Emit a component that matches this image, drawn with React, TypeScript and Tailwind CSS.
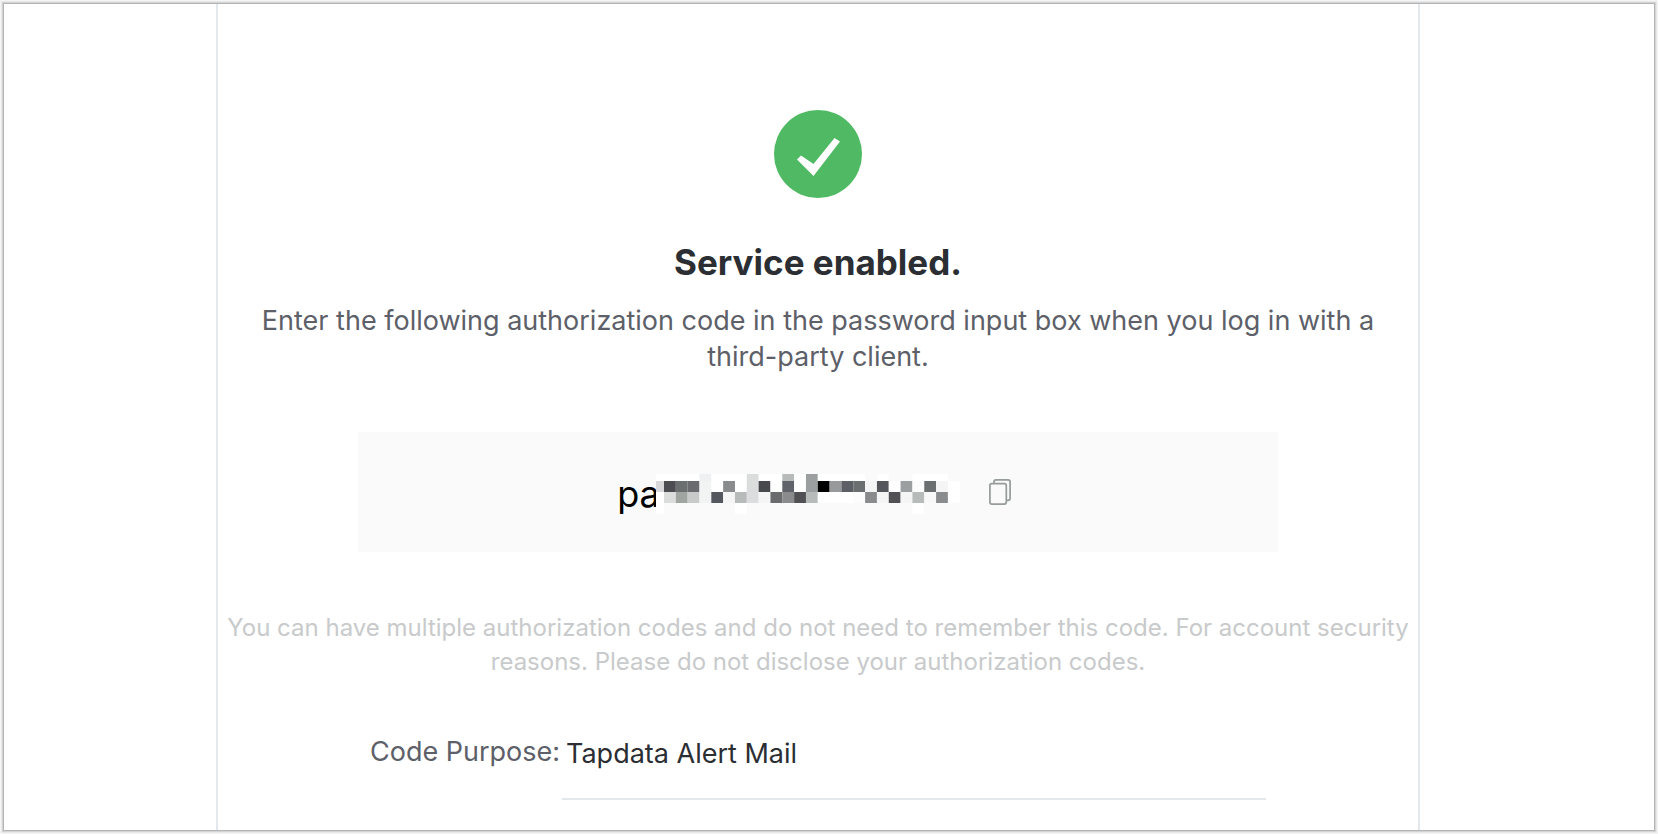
const cell = 11.83;
const rows = [
  { y: 0, h: 7, fills: ['#fff', '#fff', '#fff', '#fff', '#eff0f2', '#fff', '#fff', '#fff', '#dadddc', '#fff', '#fff', '#b7bcba', '#fff', '#9b9fa0', '#fff', '#fff', '#fff', '#fff', '', '#fff', '', '', '#fff', '#fff', '#fff'] },
  { y: 7, h: 11, fills: ['#d8d8da', '#4c4d52', '#6c6f70', '#6a6b6f', '#f2f3f3', '#fff', '#8a8b8d', '#fff', '#dadddc', '#48494d', '#fff', '#606369', '#fff', '#9b9fa0', '#000', '#97999b', '#5d5f67', '#6c6f70', '#f5f5f5', '#54565c', '#fff', '#9b9fa0', '#fcfcfc', '#6c6f70', '#f5f5f5', '#fff'] },
  { y: 18, h: 11, fills: ['#fff', '#dadddc', '#a0a5a2', '#c8cac9', '#f2f3f3', '#55575e', '#f5f5f6', '#b7bcba', '#dcdddf', '#f5f5f5', '#696b6d', '#8a8b8d', '#505055', '#b7bcba', '#fff', '#fff', '#fff', '#fcfcfc', '#8a8b8d', '#f5f5f5', '#505055', '#f5f5f5', '#b7bcba', '#f8f8f8', '#8a8b8d', '#fff'] },
  { y: 29, h: 11, fills: ['#fff', '', '', '', '', '', '', '#fff', '', '', '', '', '', '', '', '', '', '', '', '', '', '', '#fff'] },
];

function MaskedCode() {
  return (
    <svg className="relative -ml-1 h-10 w-[305px] shrink-0" viewBox="0 0 305 40" role="img" aria-label="Hidden part of the authorization code">
      {rows.map((row) =>
        row.fills.map((fill, i) =>
          fill ? (
            <rect key={`${row.y}-${i}`} x={i === 0 ? 0 : 8 + (i - 1) * cell} y={row.y} width={i === 0 ? 8 : cell} height={row.h} fill={fill} />
          ) : null,
        ),
      )}
    </svg>
  );
}

function SuccessIcon() {
  return (
    <svg className="size-[88px]" viewBox="0 0 88 88" aria-hidden="true">
      <circle cx="44" cy="44" r="44" fill="#4fba63" />
      <path d="M23 49.5 L27 45.5 L39.5 54 L60.5 28 L66 31.5 L39.5 66 Z" fill="#fff" />
    </svg>
  );
}

function CopyIcon() {
  return (
    <svg className="h-[26px] w-[22px]" viewBox="0 0 22 26" fill="none" stroke="#959c9a" strokeWidth="1.7" aria-hidden="true">
      <rect x="0.9" y="4.7" width="16.4" height="20.4" rx="2" />
      <path d="M5 4.5V2.9a2 2 0 0 1 2-2h12.1a2 2 0 0 1 2 2v16.4a2 2 0 0 1-2 2h-1.8" />
    </svg>
  );
}

export default function App() {
  return (
    <div className="flex min-h-screen bg-[#f5f5f5] p-1 font-['Inter',sans-serif]">
      <div className="flex flex-1 bg-white pr-[234px] pl-[212px] shadow-[0_0_0_1px_#b4b4b4,0_0_0_2px_#d4d4d4,0_0_0_3px_#e8e8e8]">
        <main className="flex flex-1 flex-col items-center border-x-2 border-[#e3e8ec] pt-[106px]">
          <SuccessIcon />
          <h1 className="mt-10 text-[35px] leading-[48px] font-bold text-[#2b2e33]">Service enabled.</h1>
          <p className="mt-[17px] max-w-[1140px] text-center text-[27px] leading-9 text-[#5d6068]">
            Enter the following authorization code in the password input box when you log in with a third-party client.
          </p>
          <section className="mt-[57px] flex h-[120px] w-full max-w-[920px] items-center justify-center bg-[#fafafa] pt-1 pr-2" aria-label="Authorization code">
            <span className="text-4xl text-black">pa</span>
            <MaskedCode />
            <button type="button" aria-label="Copy code" className="mb-1 ml-7">
              <CopyIcon />
            </button>
          </section>
          <p className="mt-[59px] max-w-[1200px] text-center text-2xl leading-[34px] text-[#c8cacb]">
            You can have multiple authorization codes and do not need to remember this code. For account security reasons. Please do not disclose your authorization codes.
          </p>
          <form className="mt-[25px] flex w-full max-w-[896px] items-center">
            <label htmlFor="purpose" className="w-[192px] shrink-0 text-[27px] whitespace-nowrap text-[#5d6068]">Code Purpose:</label>
            <input id="purpose" type="text" defaultValue="Tapdata Alert Mail" className="h-24 min-w-0 flex-1 border-b-2 border-[#e3e8ec] px-1 pt-1 text-[27px] text-[#2b2e33] outline-none" />
          </form>
        </main>
      </div>
    </div>
  );
}
